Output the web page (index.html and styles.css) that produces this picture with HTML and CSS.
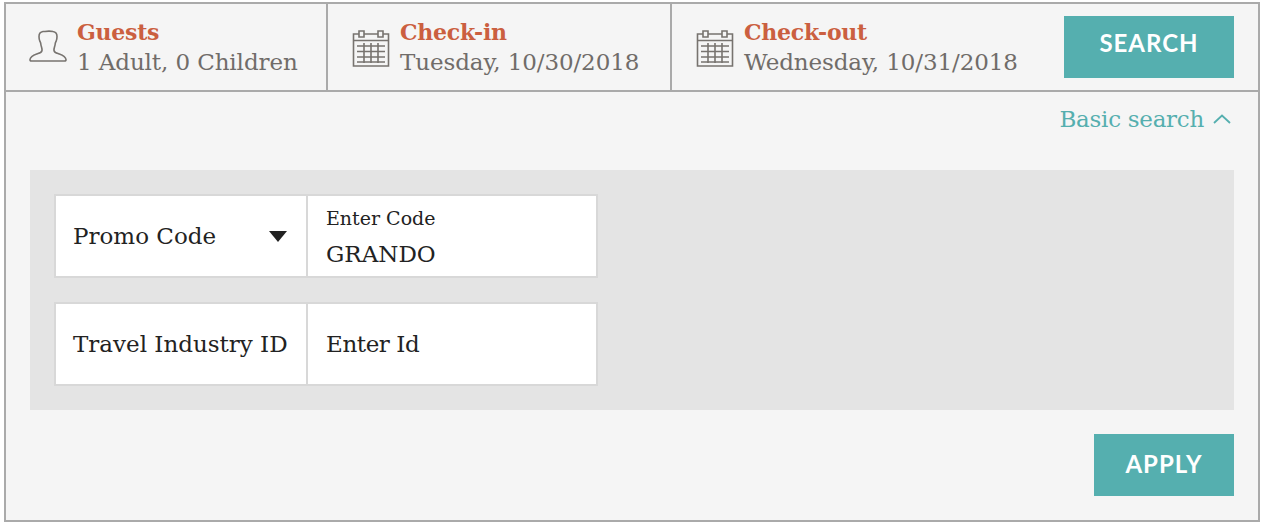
FILE: index.html
```html
<!DOCTYPE html>
<html lang="en">
<head>
	<meta charset="UTF-8">
	<title>Search</title>
	<link rel="stylesheet" href="styles.css">
</head>
<body>

<div class="booking">
	<div class="bar">
		<div class="bar-item guests">
			<svg class="bar-icon" width="38" height="38" viewBox="0 0 38 38" fill="none" stroke="#77736f" stroke-width="1.600">
				<path d="M14 2.500c-2.500 .4-4 1.500-4 5 0 2 .2 3 .8 4.500 .3 1 1 1.500 1 3 .2 2.500 1.500 4 1.200 6.500-.3 1.500-2 2.500-4 3-3 1.200-7.500 2.300-8 6-.1 1 .3 1.500 1.500 1.500h33c1.200 0 1.600-.5 1.500-1.500-.5-3.700-5-4.800-8-6-2-.5-3.700-1.500-4-3-.3-2.500 1-4 1.200-6.500 0-1.500 .7-2 1-3 .6-1.500 .8-2.500 .8-4.500 0-3.500-1.500-4.600-4-5-3-.6-5-.6-8 0z"/>
			</svg>
			<div class="bar-text">
				<div class="bar-label">Guests</div>
				<div class="bar-value">1 Adult, 0 Children</div>
			</div>
		</div>
		<div class="bar-item checkin">
			<svg class="bar-icon" width="38" height="38" viewBox="0 0 38 38" fill="none" stroke="#77736f" stroke-width="1.600">
				<path d="M1.500 5h35v32h-35z"/>
				<path d="M1.500 11.500h35M5 17h28M5 22.500h28M5 28h28M5 33h28M12 14v20M19 14v20M26 14v20"/>
				<path d="M7 2h5v6h-5zM26 2h5v6h-5z" fill="#f5f5f5"/>
			</svg>
			<div class="bar-text">
				<div class="bar-label">Check-in</div>
				<div class="bar-value">Tuesday, 10/30/2018</div>
			</div>
		</div>
		<div class="bar-item checkout">
			<svg class="bar-icon" width="38" height="38" viewBox="0 0 38 38" fill="none" stroke="#77736f" stroke-width="1.600">
				<path d="M1.500 5h35v32h-35z"/>
				<path d="M1.500 11.500h35M5 17h28M5 22.500h28M5 28h28M5 33h28M12 14v20M19 14v20M26 14v20"/>
				<path d="M7 2h5v6h-5zM26 2h5v6h-5z" fill="#f5f5f5"/>
			</svg>
			<div class="bar-text">
				<div class="bar-label">Check-out</div>
				<div class="bar-value">Wednesday, 10/31/2018</div>
			</div>
		</div>
		<button class="btn btn-search">SEARCH</button>
	</div>

	<div class="basic-link">
		<span>Basic search</span>
		<svg width="18" height="10" viewBox="0 0 18 10" fill="none" stroke="#55afaf" stroke-width="1.800">
			<path d="M1 9l8-7.500 8 7.500"/>
		</svg>
	</div>

	<div class="panel">
		<div class="field">
			<div class="field-left select">
				<span>Promo Code</span>
				<span class="caret"></span>
			</div>
			<div class="field-right">
				<div class="field-small">Enter Code</div>
				<div class="field-text">GRANDO</div>
			</div>
		</div>
		<div class="field">
			<div class="field-left">Travel Industry ID</div>
			<div class="field-right">
				<div class="field-text placeholder">Enter Id</div>
			</div>
		</div>
	</div>

	<div class="actions">
		<button class="btn btn-apply">APPLY</button>
	</div>
</div>

</body>
</html>
```

FILE: styles.css
```css
body {
	margin: 0;
	font-family: 'DejaVu Serif', serif;
	background: white;
}

.booking {
	width: 1252px;
	height: 516px;
	margin: 2px 0 0 4px;
	border: 2px solid #aaa;
	background: #f5f5f5;
}

.bar {
	display: flex;
	align-items: center;
	height: 86px;
	border-bottom: 2px solid #aaa;
}

.bar-item {
	display: flex;
	align-items: center;
	box-sizing: border-box;
	height: 100%;
	padding-top: 2px;
}

.bar-text {
	margin-top: -2px;
}

.guests {
	width: 322px;
	padding-left: 23px;
	gap: 10px;
	border-right: 2px solid #aaa;
}

.checkin {
	width: 344px;
	padding-left: 24px;
	gap: 10px;
	border-right: 2px solid #aaa;
}

.checkout {
	width: 392px;
	padding-left: 24px;
	gap: 10px;
}

.bar-label {
	font-size: 22px;
	line-height: 28px;
	font-weight: bold;
	color: #cb5f40;
	letter-spacing: -.25px;
}

.bar-value {
	margin-top: 1px;
	font-size: 23px;
	line-height: 30px;
	color: #706c69;
	letter-spacing: -.1px;
	white-space: nowrap;
}

.btn {
	display: block;
	border: none;
	height: 62px;
	background: #55afaf;
	color: white;
	font-family: 'Lato', sans-serif;
	font-weight: bold;
	font-size: 24px;
	letter-spacing: 1px;
}

.btn-search {
	width: 170px;
	padding-bottom: 10px;
}

.btn-apply {
	width: 140px;
	padding-bottom: 5px;
}

.basic-link {
	display: flex;
	justify-content: flex-end;
	align-items: center;
	gap: 9px;
	height: 54px;
	padding-right: 27px;
	color: #55afaf;
	font-size: 23px;
	letter-spacing: -.27px;
}

.panel {
	display: flex;
	flex-direction: column;
	gap: 24px;
	height: 192px;
	margin: 24px 24px 0;
	padding: 24px;
	background: #e4e4e4;
}

.field {
	display: flex;
	box-sizing: border-box;
	width: 544px;
	height: 84px;
	border: 2px solid #d8d8d8;
	background: white;
	color: #222;
	font-size: 23px;
}

.field-left {
	display: flex;
	align-items: center;
	justify-content: space-between;
	box-sizing: border-box;
	width: 252px;
	padding: 0 19px 0 17px;
	border-right: 2px solid #d8d8d8;
	white-space: nowrap;
}

.field-right {
	display: flex;
	flex-direction: column;
	justify-content: center;
	padding-left: 18px;
}

.field-small {
	margin: 4px 0 6px;
	font-size: 19px;
	line-height: 26px;
}

.field-text {
	line-height: 34px;
}

.placeholder {
	letter-spacing: -.4px;
}

.caret {
	width: 0;
	height: 0;
	border-left: 9.500px solid transparent;
	border-right: 9.500px solid transparent;
	border-top: 11px solid #222;
}

.actions {
	display: flex;
	justify-content: flex-end;
	margin-top: 24px;
	padding-right: 24px;
}
```
